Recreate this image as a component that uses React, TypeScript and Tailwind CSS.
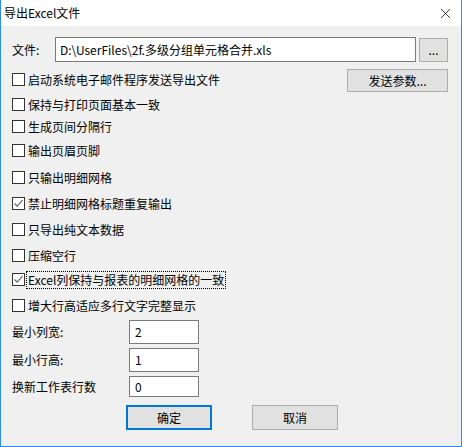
import { X } from "lucide-react";

const font = { fontFamily: '"Noto Sans CJK SC", "Liberation Sans", sans-serif' };

const CheckBox = ({ checked }: { checked?: boolean }) => (
  <span className="w-[13px] h-[13px] shrink-0 border border-[#333333] bg-white flex items-center justify-center">
    {checked && (
      <svg width="11" height="11" viewBox="0 0 11 11">
        <path d="M1.5 5.5 L4.2 8.2 L9.5 2.2" fill="none" stroke="#666" strokeWidth="1.2" />
      </svg>
    )}
  </span>
);

const CheckRow = ({
  label,
  checked,
  h,
  focus,
}: {
  label: string;
  checked?: boolean;
  h: string;
  focus?: boolean;
}) => (
  <div className={`${h} flex items-start`}>
    <div className="h-[13px] flex items-center gap-[3px]">
      <CheckBox checked={checked} />
      <span
        className={`text-[12px] leading-[16px] whitespace-nowrap text-black ${
          focus ? "outline outline-1 outline-dotted outline-black px-[1px] -ml-[1px]" : ""
        }`}
      >
        {label}
      </span>
    </div>
  </div>
);

const NumRow = ({ label, value, h }: { label: string; value: string; h: string }) => (
  <div className="flex items-center">
    <span className="w-[117px] text-[12px] text-black">{label}</span>
    <div className={`w-[70px] ${h} border border-[#7a7a7a] bg-white flex items-center pl-[5px] text-[12px] text-black`}>
      {value}
    </div>
  </div>
);

export default function App() {
  return (
    <div
      className="w-[462px] h-[447px] bg-[#f0f0f0] border-x border-b border-[#2a8cf0] flex flex-col overflow-hidden"
      style={font}
    >
      <div className="h-[26px] bg-white flex items-center justify-between pl-[3px] pr-[7px] shrink-0">
        <span className="text-[12px] text-black">导出Excel文件</span>
        <X size={17} strokeWidth={1.1} className="text-black" />
      </div>

      <div className="flex flex-col pl-[11px] pr-[13px]">
        <div className="mt-[11px] h-[25px] flex items-center">
          <span className="w-[43px] text-[12px] text-black">文件:</span>
          <div className="w-[361px] h-[25px] border border-[#7a7a7a] bg-white flex items-center pl-[4px] text-[12px] text-black">
            D:\UserFiles\2f.多级分组单元格合并.xls
          </div>
          <div className="ml-[3px] w-[29px] h-[24px] border border-[#adadad] bg-[#e1e1e1] flex items-center justify-center text-[12px] text-black">
            ...
          </div>
        </div>

        <div className="mt-[7px] h-[23px] flex justify-between">
          <div className="pt-[4px]">
            <CheckRow label="启动系统电子邮件程序发送导出文件" h="h-[13px]" />
          </div>
          <div className="w-[101px] h-[23px] border border-[#adadad] bg-[#e1e1e1] flex items-center justify-center text-[12px] text-black">
            发送参数...
          </div>
        </div>

        <div className="mt-[6px] flex flex-col">
          <CheckRow label="保持与打印页面基本一致" h="h-[22px]" />
          <CheckRow label="生成页间分隔行" h="h-[24px]" />
          <CheckRow label="输出页眉页脚" h="h-[27px]" />
          <CheckRow label="只输出明细网格" h="h-[26px]" />
          <CheckRow label="禁止明细网格标题重复输出" checked h="h-[26px]" />
          <CheckRow label="只导出纯文本数据" h="h-[26px]" />
          <CheckRow label="压缩空行" h="h-[24px]" />
          <CheckRow label="Excel列保持与报表的明细网格的一致" checked focus h="h-[26px]" />
          <CheckRow label="增大行高适应多行文字完整显示" h="h-[21px]" />
        </div>

        <div className="flex flex-col gap-[4px]">
          <NumRow label="最小列宽:" value="2" h="h-[24px]" />
          <NumRow label="最小行高:" value="1" h="h-[24px]" />
          <NumRow label="换新工作表行数" value="0" h="h-[21px]" />
        </div>

        <div className="mt-[8px] flex pl-[114px] gap-[40px]">
          <div className="w-[86px] h-[25px] border-2 border-[#0078d7] bg-[#e1e1e1] flex items-center justify-center text-[12px] text-black">
            确定
          </div>
          <div className="w-[86px] h-[25px] border border-[#adadad] bg-[#e1e1e1] flex items-center justify-center text-[12px] text-black">
            取消
          </div>
        </div>
      </div>
    </div>
  );
}
